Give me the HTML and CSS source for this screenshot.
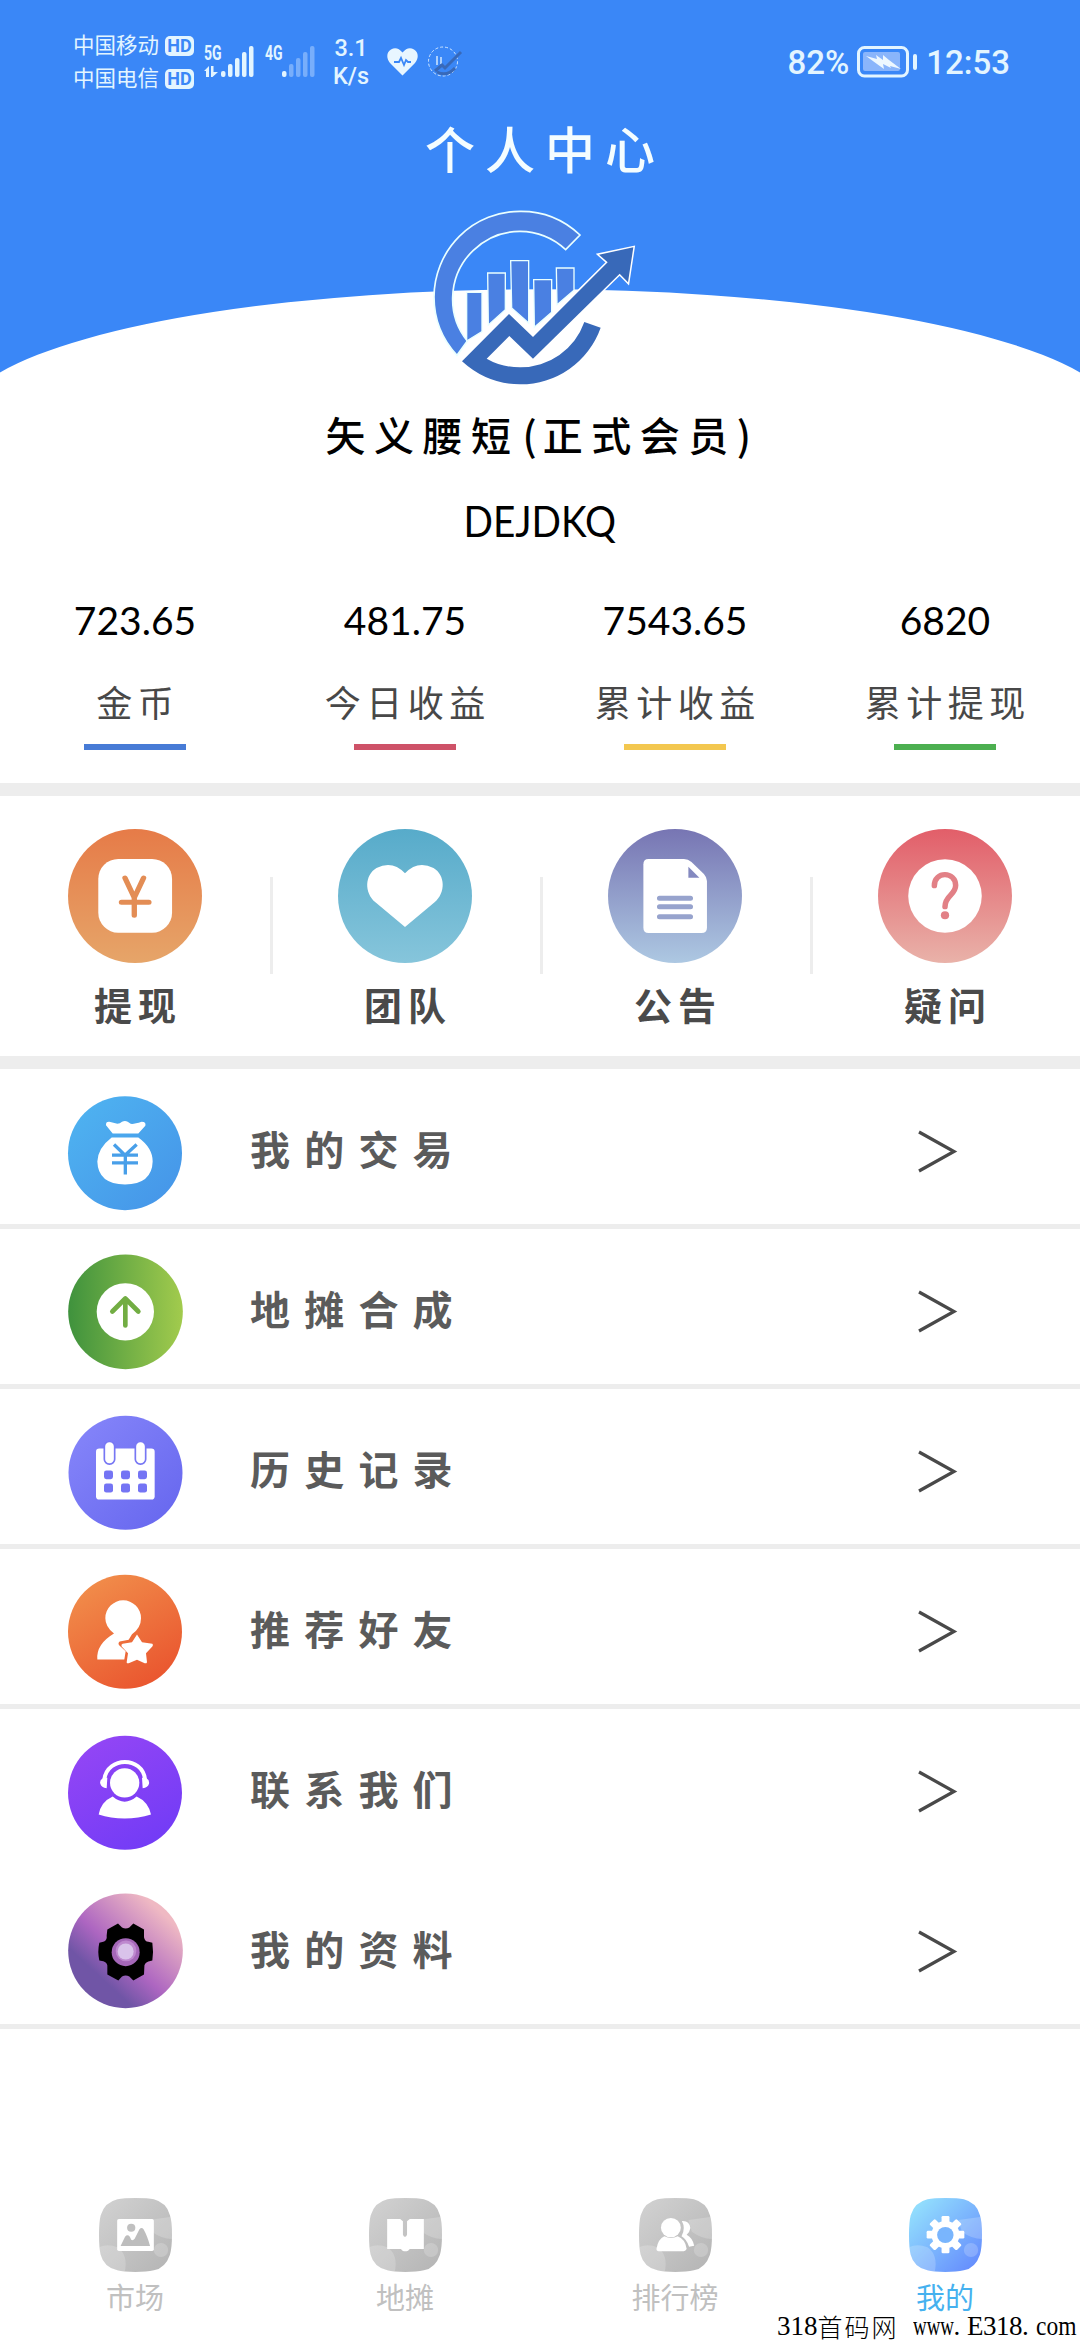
FILE: index.html
```html
<!DOCTYPE html>
<html lang="zh-CN">
<head>
<meta charset="utf-8">
<title>个人中心</title>
<link rel="stylesheet" href="styles.css">
</head>
<body>
<svg class="defs" width="0" height="0" aria-hidden="true">
  <defs>
    <linearGradient id="orange" x2="0" y2="1"><stop stop-color="#e67b48"/><stop offset="1" stop-color="#e6a569"/></linearGradient>
    <linearGradient id="teal" x2="0" y2="1"><stop stop-color="#57abca"/><stop offset="1" stop-color="#86c5db"/></linearGradient>
    <linearGradient id="indigo" x2="0" y2="1"><stop stop-color="#7775b3"/><stop offset="1" stop-color="#adc8e2"/></linearGradient>
    <linearGradient id="red" x2="0" y2="1"><stop stop-color="#e25e69"/><stop offset="1" stop-color="#e9b2a9"/></linearGradient>
    <linearGradient id="blue" x2="1" y2="1"><stop stop-color="#4fb5f1"/><stop offset="1" stop-color="#4593e8"/></linearGradient>
    <linearGradient id="green" x2="1" y2="0"><stop stop-color="#3f923d"/><stop offset="1" stop-color="#a2cb4d"/></linearGradient>
    <linearGradient id="violet" x2="1" y2="1"><stop stop-color="#8787fa"/><stop offset="1" stop-color="#6565ee"/></linearGradient>
    <linearGradient id="flame" x2="0.6" y2="1"><stop stop-color="#f2944e"/><stop offset="1" stop-color="#ea5830"/></linearGradient>
    <linearGradient id="purple" x2="0.6" y2="1"><stop stop-color="#9747f5"/><stop offset="1" stop-color="#743cf6"/></linearGradient>
    <linearGradient id="dusk" x1="0.2" y1="0.8" x2="0.8" y2="0.15"><stop offset="0.12" stop-color="#7055a6"/><stop offset="0.42" stop-color="#ad66c1"/><stop offset="1" stop-color="#efb9c3"/></linearGradient>
    <linearGradient id="tabgrey" x2="1" y2="1"><stop stop-color="#d2d2d2"/><stop offset="1" stop-color="#b4b4b4"/></linearGradient>
    <linearGradient id="tabblue" x2="1" y2="1"><stop offset="0.1" stop-color="#92defd"/><stop offset="0.9" stop-color="#668ffd"/></linearGradient>
    <clipPath id="tabclip"><path d="M392 114Q430 114 446 118Q484 128 493 166Q499 185 499 225Q499 264 493 284Q480 324 446 331Q425 336 392 336Q358 336 340 331Q300 321 291 284Q286 265 286 225Q286 185 291 166Q302 127 340 118Q358 114 392 114Z"/></clipPath>
    <g id="tabshade" clip-path="url(#tabclip)">
      <path d="M286 262Q310 250 340 262Q372 285 361 336H286Z" fill="#fff" opacity=".2"/>
      <path d="M430 180L500 170V237Q470 237 440 215Z" fill="#fff" opacity=".2"/>
      <circle cx="467" cy="270" r="21" fill="#fff" opacity=".2"/>
    </g>
    <g id="mark">
      <path d="M231 765A258 258 0 0 1 162 590A258 258 0 0 1 420 333A258 260 0 0 1 600 404L557 448A203 203 0 0 0 420 393A203 203 0 0 0 218 590A200 200 0 0 0 262 722Z" fill="#4a80e2" stroke="#eaffff" stroke-width="5"/>
      <g fill="#4a80e2" stroke="#eaffff" stroke-width="4">
        <path d="M260 576H306V694L260 722Z"/>
        <path d="M323 518H376V628L325 674Z"/><path d="M392 481H446V668L395 623Z"/>
        <path d="M461 538H515V636L463 681Z"/><path d="M529 503H582V570L531 613Z"/>
      </g>
      <path d="M246 783L387 641L459 707L683 486L657 463L760 441L744 546L719 520L459 775L388 707L320 775Q365 801 420 801A203 203 0 0 0 613 665L662 682A255 255 0 0 1 420 852Q322 852 246 783Z" fill="#fff" stroke="#fff" stroke-width="9"/>
      <path d="M246 783L387 641L459 710L683 486L657 463L760 441L744 546L719 520L459 775L388 707L320 775Q365 801 420 801A203 203 0 0 0 613 665L662 682A255 255 0 0 1 420 852Q322 852 246 783Z" fill="#3869b9"/>
    </g>
    <path id="chevron" d="M2 2L37 21.5L2 41" fill="none" stroke="#494949" stroke-width="3.2"/>
  </defs>
</svg>
<div class="screen">
  <header class="hero">
    <svg class="hero-bg" viewBox="0 0 1080 373"><path d="M0 0H1080V372.5A580 131 0 0 0 0 372.5Z" fill="#3a87f7"/></svg>
    <div class="status">
      <div class="carriers">
        <div class="carrier"><span>中国移动</span><b>HD</b></div>
        <div class="carrier"><span>中国电信</span><b>HD</b></div>
      </div>
      <div class="net">
        <span class="gen">5G</span>
        <svg class="signal" viewBox="0 0 51 32" fill="#e3f5ff"><path d="M0 25L5 20V31H2V25ZM7 20H9.500V26H14L8.500 31H7Z"/><rect x="17" y="25" width="4.500" height="6" rx="2"/><rect x="24" y="18" width="4.500" height="13" rx="2"/><rect x="31" y="12" width="4.500" height="19" rx="2"/><rect x="38" y="6" width="4.500" height="25" rx="2"/><rect x="45" y="0" width="4.500" height="31" rx="2"/></svg>
      </div>
      <div class="net">
        <span class="gen">4G</span>
        <svg class="signal" viewBox="0 0 51 32" fill="#78aefb"><rect x="17" y="25" width="4.500" height="6" rx="2" fill="#e3f5ff"/><rect x="24" y="18" width="4.500" height="13" rx="2"/><rect x="31" y="12" width="4.500" height="19" rx="2"/><rect x="38" y="6" width="4.500" height="25" rx="2"/><rect x="45" y="0" width="4.500" height="31" rx="2"/></svg>
      </div>
      <div class="speed"><span>3.1</span><span>K/s</span></div>
      <svg class="heart" viewBox="0 0 31 28"><path d="M15.500 27.500L3 15C-1 10-.5 4 4 1.500Q10-2 15.500 4.500Q21-2 27 1.500C31.500 4 32 10 28 15Z" fill="#e8f6ff"/><path d="M7 14H12L14 10L17 17L19 12L21 14H24" fill="none" stroke="#3a87f7" stroke-width="1.800"/></svg>
      <svg class="mini" viewBox="0 0 36 31"><circle cx="16" cy="15.500" r="14.500" fill="none" stroke="#cfe6ff" stroke-width="1" stroke-dasharray="3 2"/><path d="M10 10V19M14 11V18" stroke="#e8f6ff" stroke-width="1.300"/><path d="M8 25L15 19L18 22L34 6M10 26Q20 31 28 22" fill="none" stroke="#3869b9" stroke-width="3"/></svg>
      <div class="power">
        <span>82%</span>
        <svg class="battery" viewBox="0 0 61 32"><rect x="1.500" y="1.500" width="49" height="28.500" rx="6" fill="none" stroke="#e3f5ff" stroke-width="3"/><rect x="6" y="6" width="37" height="19" rx="2" fill="#8ab5fb"/><path d="M9 10L20 13L19 9L26 14V9L32 14L44 23L33 20L34 22L26 18L27 23L20 18Z" fill="#eef8ff"/><rect x="56" y="8" width="4" height="16" rx="2" fill="#e3f5ff"/></svg>
        <span>12:53</span>
      </div>
    </div>
    <h1 class="title">个人中心</h1>
    <svg class="logo" viewBox="150 320 630 549"><use href="#mark"/></svg>
    <p class="name">矢义腰短<span class="paren">(</span>正式会员<span>)</span></p>
    <p class="code">DEJDKQ</p>
    <div class="stats">
      <div class="stat blue"><strong>723.65</strong><span>金币</span></div>
      <div class="stat red"><strong>481.75</strong><span>今日收益</span></div>
      <div class="stat yellow"><strong>7543.65</strong><span>累计收益</span></div>
      <div class="stat green"><strong>6820</strong><span>累计提现</span></div>
    </div>
  </header>

  <section class="actions">
    <div class="action">
      <svg viewBox="190 147 376 402" preserveAspectRatio="none"><ellipse cx="378" cy="348" rx="188" ry="201" fill="url(#orange)"/><rect x="275" y="237" width="207" height="221" rx="56" ry="60" fill="#fff"/><path d="M350 294L376 353L402 294M340 367H417M376 353V406" fill="none" stroke="#e38d55" stroke-width="15" stroke-linecap="round"/></svg>
      <span>提现</span>
    </div>
    <div class="action">
      <svg viewBox="947 147 376 402" preserveAspectRatio="none"><ellipse cx="1135" cy="348" rx="188" ry="201" fill="url(#teal)"/><path d="M1135 441L1052 367C1020 338 1022 285 1055 264Q1100 240 1135 280Q1170 240 1215 264C1248 285 1250 338 1218 367Z" fill="#fff"/></svg>
      <span>团队</span>
    </div>
    <div class="action">
      <svg viewBox="197 147 390 402" preserveAspectRatio="none"><ellipse cx="392" cy="348" rx="195" ry="201" fill="url(#indigo)"/><path d="M315 237H418Q430 237 440 246L476 282Q485 292 485 303V443Q485 459 469 459H315Q300 459 300 443V253Q300 237 315 237Z" fill="#fff"/><path d="M431 260V293H463Z" fill="#8489c0"/><path d="M347 355H437M347 380H437M347 410H437" stroke="#97a3cd" stroke-width="15" stroke-linecap="round"/></svg>
      <span>公告</span>
    </div>
    <div class="action">
      <svg viewBox="982 147 390 402" preserveAspectRatio="none"><ellipse cx="1177" cy="348" rx="195" ry="201" fill="url(#red)"/><ellipse cx="1177" cy="348" rx="107" ry="110" fill="#fff"/><path d="M1146 317C1146 272 1208 274 1208 316C1208 346 1177 345 1177 380" fill="none" stroke="#e28086" stroke-width="16" stroke-linecap="round"/><circle cx="1177" cy="406" r="12" fill="#e28086"/></svg>
      <span>疑问</span>
    </div>
  </section>

  <main class="menu">
    <div class="row">
      <svg class="row-icon" viewBox="84 73.500 345 345"><circle cx="255" cy="248" r="171" fill="url(#blue)"/><path d="M218 189L198 164Q197 153 208 154L232 160Q240 160 246 154Q255 149 263 154L272 160Q281 162 305 154Q319 154 316 166L295 189ZM215 201H295Q338 232 338 273Q336 341 255 342Q174 341 172 273Q174 232 215 201Z" fill="#fff"/><path d="M222 222L255 254L290 222M216 254H294M216 277H294M256 254V312" fill="none" stroke="#489fe9" stroke-width="10"/></svg>
      <span>我的交易</span>
      <svg class="chevron" viewBox="0 0 41 43"><use href="#chevron"/></svg>
    </div>
    <div class="row">
      <svg class="row-icon" viewBox="84 553.500 345 345"><circle cx="256.500" cy="724" r="172" fill="url(#green)"/><circle cx="256" cy="724" r="86" fill="#fff"/><path d="M217 723L256 684L295 723M256 687V765" fill="none" stroke="#72ad43" stroke-width="14" stroke-linecap="round" stroke-linejoin="round"/></svg>
      <span>地摊合成</span>
      <svg class="chevron" viewBox="0 0 41 43"><use href="#chevron"/></svg>
    </div>
    <div class="row">
      <svg class="row-icon" viewBox="84 1033.500 345 345"><circle cx="256.500" cy="1207" r="171" fill="url(#violet)"/><rect x="168" y="1134" width="176" height="153" rx="10" fill="#fff"/><g fill="#fff" stroke="#7777f4" stroke-width="5"><rect x="193" y="1113" width="31" height="68" rx="15"/><rect x="286" y="1113" width="31" height="68" rx="15"/></g><g fill="#7474f4"><rect x="192" y="1200" width="27" height="26" rx="7"/><rect x="243" y="1200" width="27" height="26" rx="7"/><rect x="294" y="1200" width="27" height="26" rx="7"/><rect x="192" y="1239" width="27" height="27" rx="7"/><rect x="243" y="1239" width="27" height="27" rx="7"/><rect x="294" y="1239" width="27" height="27" rx="7"/></g></svg>
      <span>历史记录</span>
      <svg class="chevron" viewBox="0 0 41 43"><use href="#chevron"/></svg>
    </div>
    <div class="row">
      <svg class="row-icon" viewBox="84 73.500 345 345"><circle cx="255" cy="244" r="171" fill="url(#flame)"/><path d="M172 327Q168 281 222 249Q196 229 196 203A53 53 0 0 1 303 203Q303 232 276 251L266 268L239 273Q232 279 239 286L257 302L253 327Z" fill="#fff"/><path d="M291 252L306 275L337 280Q341 283 337 288L318 308L321 335Q319 340 314 338L291 328L266 338Q260 340 260 335L264 308L245 288Q242 282 248 280L276 275Z" fill="#fff"/></svg>
      <span>推荐好友</span>
      <svg class="chevron" viewBox="0 0 41 43"><use href="#chevron"/></svg>
    </div>
    <div class="row plain">
      <svg class="row-icon" viewBox="84 553.500 345 345"><circle cx="255" cy="727" r="171" fill="url(#purple)"/><circle cx="254" cy="697" r="44" fill="#fff"/><path d="M193 686C203 617 307 617 315 686" fill="none" stroke="#fff" stroke-width="12"/><path d="M202 682L188 684Q178 688 181 700Q184 712 200 713ZM306 682L320 684Q329 688 327 700Q324 712 308 713ZM218 738Q254 769 290 738Q325 754 333 792Q295 804 254 804Q212 804 176 792Q183 754 218 738Z" fill="#fff"/></svg>
      <span>联系我们</span>
      <svg class="chevron" viewBox="0 0 41 43"><use href="#chevron"/></svg>
    </div>
    <div class="row">
      <svg class="row-icon" viewBox="84 1033.500 345 345" overflow="visible"><circle cx="256.500" cy="1201" r="172" fill="url(#dusk)"/><path d="M202 1137L234 1119L246 1131Q257 1137 268 1131L280 1119L312 1137V1160Q314 1172 325 1174L337 1177Q341 1203 337 1230L325 1233Q312 1238 313 1250L312 1272L280 1290L268 1278Q257 1272 246 1278L235 1290L202 1272V1245Q200 1235 190 1232L178 1230Q172 1203 178 1177L190 1174Q202 1170 200 1155Z"/><circle cx="257" cy="1205" r="42" fill="#a467b8"/><circle cx="258" cy="1201" r="31" fill="#be89cf"/><circle cx="257" cy="1203" r="24" fill="#d9c3ea"/></svg>
      <span>我的资料</span>
      <svg class="chevron" viewBox="0 0 41 43"><use href="#chevron"/></svg>
    </div>
  </main>

  <nav class="tabs">
    <div class="tab">
      <svg viewBox="286 114 213 222" preserveAspectRatio="none"><rect x="286" y="114" width="213" height="222" fill="url(#tabgrey)" clip-path="url(#tabclip)"/><use href="#tabshade"/><rect x="339" y="177" width="107" height="96" rx="5" fill="#fff"/><circle cx="380" cy="203" r="12" fill="#c0c0c0"/><path d="M349 258L362 230Q369 222 376 230L380 239Q385 243 390 236L404 208Q410 200 416 208Q427 228 435 258Z" fill="#bdbdbd"/></svg>
      <span>市场</span>
    </div>
    <div class="tab">
      <svg viewBox="286 114 213 222" preserveAspectRatio="none"><rect x="286" y="114" width="213" height="222" fill="url(#tabgrey)" clip-path="url(#tabclip)"/><use href="#tabshade"/><path d="M339 177H377L385 184V224Q391 237 397 224V184L405 177H446V267H405L400 272Q391 276 384 272L379 267H339Z" fill="#fff"/></svg>
      <span>地摊</span>
    </div>
    <div class="tab">
      <svg viewBox="286 114 213 222" preserveAspectRatio="none"><rect x="286" y="114" width="213" height="222" fill="url(#tabgrey)" clip-path="url(#tabclip)"/><use href="#tabshade"/><circle cx="379" cy="203" r="29" fill="#fff"/><path d="M360 229Q379 239 399 229Q421 238 425 266Q422 274 412 274H348Q336 274 337 266Q342 237 360 229ZM411 183Q433 181 436 204Q434 217 425 224Q443 234 447 257L432 260Q425 238 410 229Q423 205 411 183Z" fill="#fff"/></svg>
      <span>排行榜</span>
    </div>
    <div class="tab active">
      <svg viewBox="286 114 213 222" preserveAspectRatio="none"><rect x="286" y="114" width="213" height="222" fill="url(#tabblue)" clip-path="url(#tabclip)"/><use href="#tabshade"/><g fill="#fff"><rect x="381" y="168" width="23" height="112" rx="4"/><rect x="381" y="168" width="23" height="112" rx="4" transform="rotate(45 392.500 224)"/><rect x="381" y="169" width="23" height="110" rx="4" transform="rotate(90 392.500 224)"/><rect x="381" y="168" width="23" height="112" rx="4" transform="rotate(135 392.500 224)"/><circle cx="392.500" cy="224" r="41"/></g><circle cx="392" cy="225" r="24" fill="#79b5fd"/></svg>
      <span>我的</span>
    </div>
  </nav>
  <div class="watermark"><span>318</span><span class="cn">首码网</span><span class="www">www</span><span class="dot">.</span><span class="e">E318</span><span class="dot">.</span><span class="com">com</span></div>
</div>
</body>
</html>
```
FILE: styles.css
```css
* { box-sizing: border-box; }
body { margin: 0; background: #fff; font-family: "Noto Sans CJK SC", sans-serif; }
h1, p { margin: 0; font-weight: 400; }
svg { display: block; flex: none; }
.defs { position: absolute; }
.screen { position: relative; display: flex; flex-direction: column; width: 1080px; height: 2340px; overflow: hidden; background: #fff; }

.hero { position: relative; display: flex; flex-direction: column; align-items: center; height: 783px; }
.hero-bg { position: absolute; top: 0; left: 0; width: 1080px; height: 373px; }
.hero > :not(.hero-bg) { position: relative; }

.status { display: flex; width: 1080px; height: 117px; padding: 0 70px 0 73px; color: #e3f5ff; font-family: Roboto, "Noto Sans CJK SC", sans-serif; }
.carriers { padding-top: 29px; }
.carrier { display: flex; align-items: center; gap: 6px; height: 33px; font-size: 21.5px; line-height: 33px; white-space: nowrap; }
.carrier b { width: 29px; height: 20px; border-radius: 5px; background: #e3f5ff; color: #3a87f7; font-size: 18px; font-weight: 700; line-height: 20px; text-align: center; }
.net { position: relative; width: 51px; height: 31px; margin: 46px 0 0 10px; }
.net .signal { width: 51px; height: 32px; }
.gen { position: absolute; left: 0; top: -1px; font-size: 20px; font-weight: 700; line-height: 16px; transform: scaleX(.7); transform-origin: left; }
.speed { display: flex; flex-direction: column; width: 50px; margin: 34px 0 0 10px; font-size: 23.5px; font-weight: 500; line-height: 28px; text-align: center; }
.heart { width: 31px; height: 28px; margin: 48px 0 0 11px; }
.mini { width: 36px; height: 31px; margin: 46px 0 0 9px; }
.power { display: flex; gap: 8px; margin: 43px 0 0 auto; font-size: 33px; font-weight: 500; line-height: 40px; }
.battery { width: 61px; height: 32px; margin-top: 3px; }

.title { color: #f4fdff; font-size: 50px; font-weight: 500; line-height: 60px; letter-spacing: 10px; text-indent: 10px; }
.logo { width: 210px; height: 183px; margin: 30px 10px 0 0; }
.name { margin-top: 14px; color: #000; font-size: 40px; font-weight: 500; line-height: 60px; letter-spacing: 8.5px; text-indent: 5px; white-space: nowrap; }
.name .paren { margin-left: 3px; letter-spacing: 6px; }
.code { margin-top: 27px; color: #000; font-family: Lato, sans-serif; font-size: 43px; line-height: 60px; transform: scaleX(.9); }
.stats { display: grid; grid-template-columns: repeat(4, 270px); margin-top: 44px; }
.stat { display: flex; flex-direction: column; align-items: center; }
.stat strong { color: #000; font-family: Lato, sans-serif; font-size: 39px; font-weight: 400; line-height: 50px; }
.stat span { margin-top: 31px; color: #484848; font-size: 36px; line-height: 50px; letter-spacing: 5.5px; text-indent: 5.5px; white-space: nowrap; }
.stat::after { content: ""; width: 102px; height: 6px; margin-top: 18px; background: #477bd6; }
.stat.red::after { background: #ce5268; }
.stat.yellow::after { background: #f3c74f; }
.stat.green::after { background: #4caf50; }

.actions { display: grid; grid-template-columns: repeat(4, 270px); height: 286px; border: solid #ededed; border-width: 13px 0; }
.action { position: relative; display: flex; flex-direction: column; align-items: center; padding-top: 33px; }
.action svg { width: 134px; height: 134px; }
.action span { margin-top: 16px; color: #4a4a4a; font-size: 38px; font-weight: 700; line-height: 50px; letter-spacing: 6px; text-indent: 6px; }
.action + .action::before { content: ""; position: absolute; left: 0; top: 81px; width: 3px; height: 97px; background: #ededed; }

.row { display: flex; align-items: center; height: 160px; padding: 11px 122px 0 68px; border-bottom: 5px solid #ededed; }
.row.plain { border-color: transparent; }
.row-icon { width: 115px; height: 115px; overflow: visible; }
.row span { flex: 1; margin: -9px 0 0 67px; color: #5b5b5b; font-size: 40px; font-weight: 700; line-height: 60px; letter-spacing: 14.2px; }
.chevron { width: 41px; height: 43px; margin-top: -1px; }

.tabs { display: grid; grid-template-columns: repeat(4, 270px); padding-top: 169px; }
.tab { display: flex; flex-direction: column; align-items: center; color: #c0c0c0; font-size: 29px; line-height: 40px; }
.tab svg { width: 73px; height: 74px; }
.tab span { margin-top: 4px; }
.tab.active { color: #45b1ef; }

.watermark { position: absolute; left: 777px; top: 2312px; display: flex; height: 28px; color: #000; font-family: "Liberation Serif", serif; font-size: 27px; line-height: 28px; white-space: nowrap; }
.watermark .cn { width: 95px; font-family: "Noto Sans CJK SC", sans-serif; font-size: 25px; font-weight: 300; letter-spacing: 2px; line-height: 28px; }
.watermark .www { width: 41px; transform: scaleX(.7); transform-origin: left; }
.watermark .dot { width: 13.5px; }
.watermark .e { width: 55px; letter-spacing: -.5px; }
.watermark .com { transform: scaleX(.87); transform-origin: left; }
```
